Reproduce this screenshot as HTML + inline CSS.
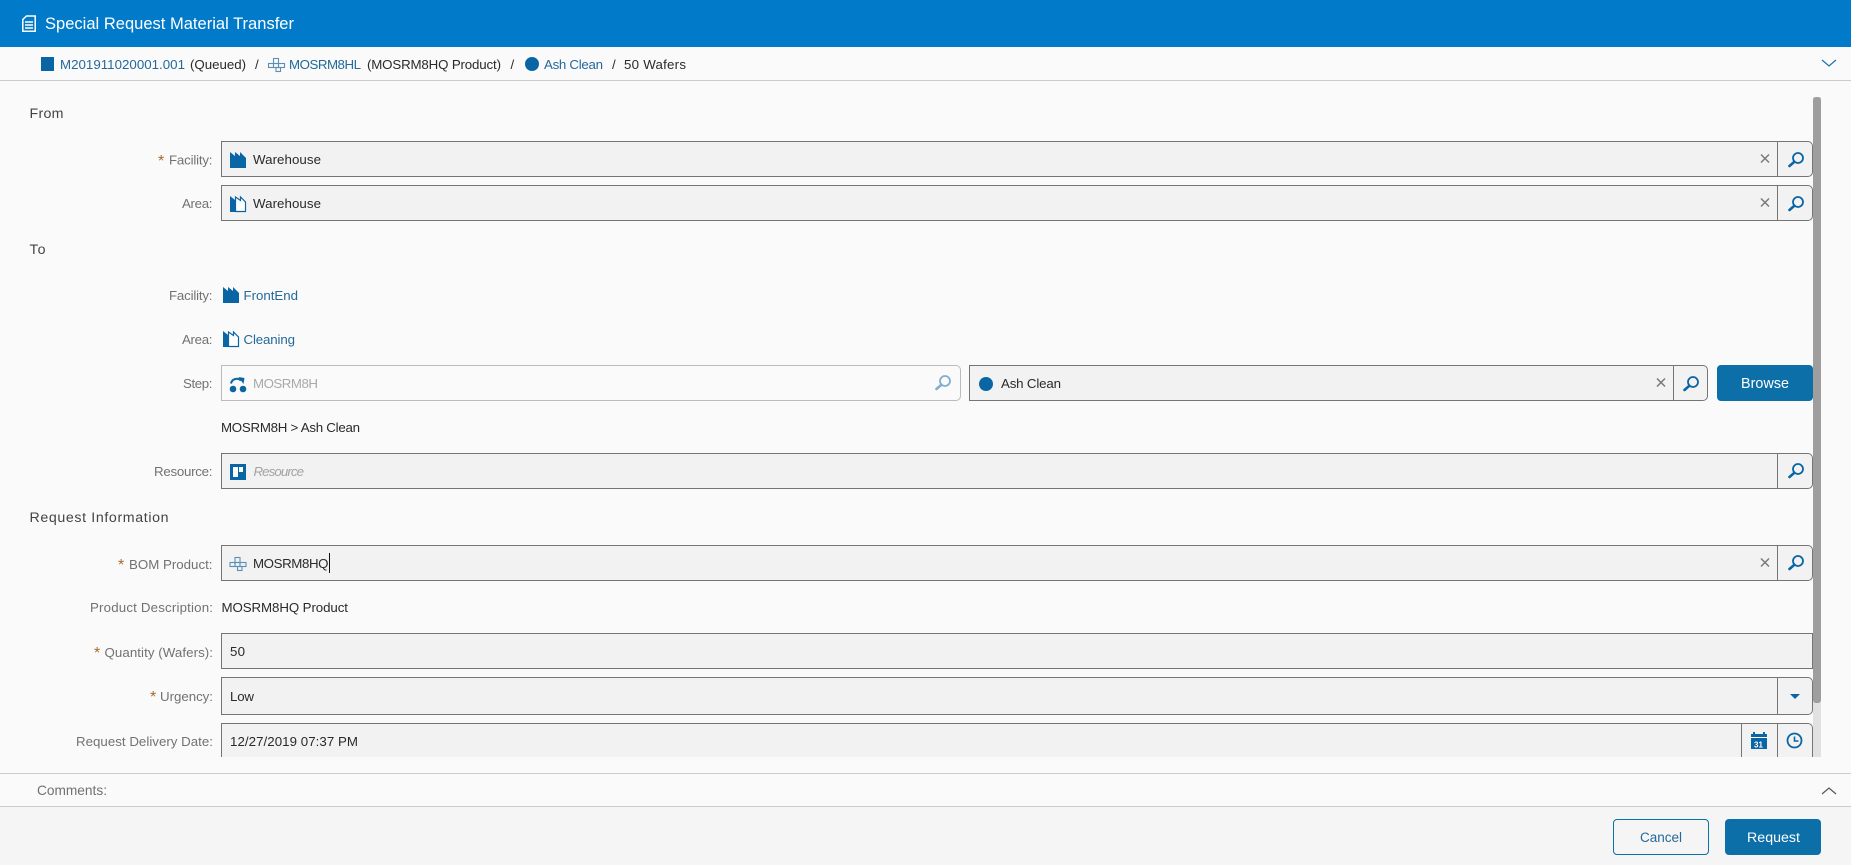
<!DOCTYPE html>
<html lang="en"><head><meta charset="utf-8"><title>Special Request Material Transfer</title>
<style>
html,body{margin:0;padding:0;background:#fafafa}
body{position:relative;width:1851px;height:865px;overflow:hidden;font-family:"Liberation Sans",sans-serif}
.b{position:absolute;box-sizing:border-box}
.in{background:#f2f2f2;border:1px solid #757575;height:36px}
.r{border-radius:0 5px 5px 0}
.d{position:absolute;top:0;bottom:0;width:1px;background:#757575}
svg.o{position:absolute;left:0;top:0}
text{font-family:"Liberation Sans",sans-serif;font-size:13.3px;fill:#2a2a2a}
.l{fill:#727272}.a{fill:#a8692b;font-size:16px}.k{fill:#24699a}.h{fill:#444;font-size:14.2px}
</style></head><body>
<div class="b" style="left:0;top:0;width:1851px;height:47px;background:#007ac9"></div>
<div class="b" style="left:0;top:80px;width:1851px;height:1px;background:#ccc"></div>
<div class="b" style="left:1813px;top:97px;width:8px;height:660px;background:#e1e1e1"></div>
<div class="b" style="left:1813px;top:97px;width:8px;height:606px;background:#9e9e9e;border-radius:3px"></div>

<div class="b in r" style="left:221px;top:141px;width:1592px"><div class="d" style="left:1555px"></div></div>
<div class="b in r" style="left:221px;top:185px;width:1592px"><div class="d" style="left:1555px"></div></div>
<div class="b" style="left:221px;top:365px;width:740px;height:36px;background:#fafafa;border:1px solid #bbb;border-radius:0 5px 5px 0"></div>
<div class="b in r" style="left:969px;top:365px;width:739px"><div class="d" style="left:703px"></div></div>
<div class="b" style="left:1717px;top:365px;width:96px;height:36px;background:#0d6fa8;border-radius:4px"></div>
<div class="b in r" style="left:221px;top:453px;width:1592px"><div class="d" style="left:1555px"></div></div>
<div class="b in r" style="left:221px;top:545px;width:1592px"><div class="d" style="left:1555px"></div></div>
<div class="b in" style="left:221px;top:633px;width:1592px"></div>
<div class="b in r" style="left:221px;top:677px;width:1592px;height:38px"><div class="d" style="left:1555px"></div></div>
<div class="b in" style="left:221px;top:723px;width:1592px;height:34px;border-bottom:0;border-radius:0 5px 0 0"><div class="d" style="left:1519px"></div><div class="d" style="left:1555px"></div></div>
<div class="b" style="left:329px;top:553px;width:1px;height:20px;background:#111"></div>

<div class="b" style="left:0;top:773px;width:1851px;height:1px;background:#ccc"></div>
<div class="b" style="left:0;top:806px;width:1851px;height:59px;background:#f5f5f5;border-top:1px solid #ccc"></div>
<div class="b" style="left:1613px;top:819px;width:96px;height:36px;border:1px solid #0d6fa8;border-radius:4px"></div>
<div class="b" style="left:1725px;top:819px;width:96px;height:36px;background:#0d6fa8;border-radius:4px"></div>

<svg class="o" width="1851" height="865" viewBox="0 0 1851 865">
<defs>
<g id="fac"><path d="M0 16V0l5 4V0l5 4V0l4 4 2 2v10z" fill="#0a65a5"/></g>
<g id="area"><path d="M0 16V0l5 4v12z" fill="#0a65a5"/><path d="M5.5 15.500V1l5 3.500V1l5 5v9.500z" fill="#fff" stroke="#0a65a5" stroke-width="1.200"/></g>
<g id="mag" fill="none" stroke="#0a65a5"><circle cx="10" cy="6" r="5" stroke-width="1.800"/><path d="M6.300 9.800 1.500 14" stroke-width="2.600" stroke-linecap="round"/></g>
<g id="x" stroke="#7a7a7a" stroke-width="1.500"><path d="M0 0 8 8M8 0 0 8"/></g>
<g id="prod" fill="none" stroke="#5b8fb8" stroke-width="1.100"><rect x="5.500" y="0.500" width="5" height="5"/><rect x="0.500" y="5.500" width="5" height="4"/><rect x="5.500" y="5.500" width="5" height="4"/><rect x="10.500" y="5.500" width="6" height="4"/><rect x="8" y="9.500" width="4.500" height="4"/></g>
</defs>

<!-- title -->
<path d="M26.500 16h8.700v15.200H22.800V19.500z" fill="none" stroke="#fff" stroke-width="1.500"/>
<path d="M25 22h8M25 25h8M25 28h8" stroke="#fff" stroke-width="1.600"/>
<text x="45" y="29" textLength="249" style="font-size:16.500px;fill:#fff">Special Request Material Transfer</text>

<!-- breadcrumb -->
<rect x="41" y="57" width="13" height="14" fill="#0a65a5"/>
<text x="60" y="69" textLength="125" class="k">M201911020001.001</text>
<text x="190" y="69" textLength="56">(Queued)</text>
<text x="255" y="69">/</text>
<use href="#prod" x="268" y="58"/>
<text x="289" y="69" textLength="72" class="k">MOSRM8HL</text>
<text x="367" y="69" textLength="134">(MOSRM8HQ Product)</text>
<text x="510.500" y="69">/</text>
<circle cx="532" cy="64" r="7" fill="#0a65a5"/>
<text x="544" y="69" textLength="59" class="k">Ash Clean</text>
<text x="612" y="69">/</text>
<text x="624" y="69" textLength="62">50 Wafers</text>
<path d="M1822 60l7 6 7-6" fill="none" stroke="#1e6fa8" stroke-width="1.200"/>

<!-- From -->
<text x="29.500" y="118" textLength="34" class="h">From</text>
<text x="158" y="166" class="a">*</text>
<text x="169" y="164.500" textLength="43.500" class="l">Facility:</text>
<use href="#fac" x="230" y="152"/>
<text x="253" y="164" textLength="68">Warehouse</text>
<use href="#x" x="1761" y="154.500"/><use href="#mag" x="1788" y="152"/>
<text x="182" y="208" textLength="30.500" class="l">Area:</text>
<use href="#area" x="230" y="196"/>
<text x="253" y="208" textLength="68">Warehouse</text>
<use href="#x" x="1761" y="198.500"/><use href="#mag" x="1788" y="196"/>

<!-- To -->
<text x="29.500" y="254" textLength="16" class="h">To</text>
<text x="169" y="300" textLength="43.500" class="l">Facility:</text>
<use href="#fac" x="223" y="287"/>
<text x="243.500" y="300" textLength="54.500" class="k">FrontEnd</text>
<text x="182" y="344" textLength="30.500" class="l">Area:</text>
<use href="#area" x="223" y="331"/>
<text x="243.500" y="344" textLength="51.500" class="k">Cleaning</text>
<text x="183" y="388" textLength="29.500" class="l">Step:</text>
<g fill="#0a65a5"><circle cx="233" cy="389" r="3.300"/><circle cx="243" cy="389" r="3.300"/><path d="M231 383.500c1-5 7-6 10-3" fill="none" stroke="#0a65a5" stroke-width="2"/><path d="M238.500 377l6 1-1 6z"/></g>
<text x="253" y="388" textLength="65" style="fill:#a9a9a9">MOSRM8H</text>
<use href="#mag" x="935" y="375" opacity=".5"/>
<circle cx="986" cy="384" r="7" fill="#0a65a5"/>
<text x="1001" y="388" textLength="60">Ash Clean</text>
<use href="#x" x="1657" y="378.500"/><use href="#mag" x="1683" y="376"/>
<text x="1741" y="388" textLength="48" style="font-size:14.300px;fill:#fff">Browse</text>
<text x="221" y="432" textLength="139">MOSRM8H &gt; Ash Clean</text>
<text x="154" y="476" textLength="58.500" class="l">Resource:</text>
<rect x="230" y="464" width="16" height="16" fill="#0a65a5"/><rect x="233" y="467" width="5" height="10" fill="#fff"/><rect x="239" y="467" width="4" height="5" fill="#fff"/>
<text x="253.500" y="476" textLength="50.500" style="fill:#a3a3a3;font-style:italic">Resource</text>
<use href="#mag" x="1788" y="463"/>

<!-- Request Information -->
<text x="29.500" y="522" textLength="139" class="h">Request Information</text>
<text x="118" y="570" class="a">*</text>
<text x="129" y="569" textLength="83.500" class="l">BOM Product:</text>
<use href="#prod" x="229.500" y="557"/>
<text x="253" y="568" textLength="75.500">MOSRM8HQ</text>
<use href="#x" x="1761" y="558.500"/><use href="#mag" x="1788" y="555"/>
<text x="90" y="612" textLength="123" class="l">Product Description:</text>
<text x="221.500" y="612" textLength="126.500">MOSRM8HQ Product</text>
<text x="94" y="658" class="a">*</text>
<text x="104.500" y="657" textLength="108.500" class="l">Quantity (Wafers):</text>
<text x="230" y="656" textLength="15">50</text>
<text x="150" y="702" class="a">*</text>
<text x="160" y="701" textLength="53" class="l">Urgency:</text>
<text x="230" y="701" textLength="24">Low</text>
<path d="M1790 694h10l-5 5z" fill="#0a65a5"/>
<text x="76" y="746" textLength="137" class="l">Request Delivery Date:</text>
<text x="230" y="746" textLength="128">12/27/2019 07:37 PM</text>
<!-- calendar -->
<rect x="1751" y="734" width="16" height="15" fill="#0a65a5"/><rect x="1753" y="732" width="2" height="3" fill="#0a65a5"/><rect x="1763" y="732" width="2" height="3" fill="#0a65a5"/><rect x="1751" y="737" width="16" height="1" fill="#fff"/>
<text x="1754" y="747.500" style="font-size:8px;font-weight:bold;fill:#fff">31</text>
<circle cx="1794.500" cy="740.500" r="7" fill="none" stroke="#0a65a5" stroke-width="1.800"/><path d="M1794.500 736.500v4.500h4" fill="none" stroke="#0a65a5" stroke-width="1.600"/>

<!-- Footer -->
<text x="37" y="795" textLength="70" class="l" style="font-size:13.700px">Comments:</text>
<path d="M1822 794l7-6 7 6" fill="none" stroke="#555" stroke-width="1.200"/>
<text x="1640" y="842" textLength="42" class="k" style="font-size:13.500px">Cancel</text>
<text x="1747" y="842" textLength="53" style="font-size:14.200px;fill:#fff">Request</text>
</svg>
</body></html>
